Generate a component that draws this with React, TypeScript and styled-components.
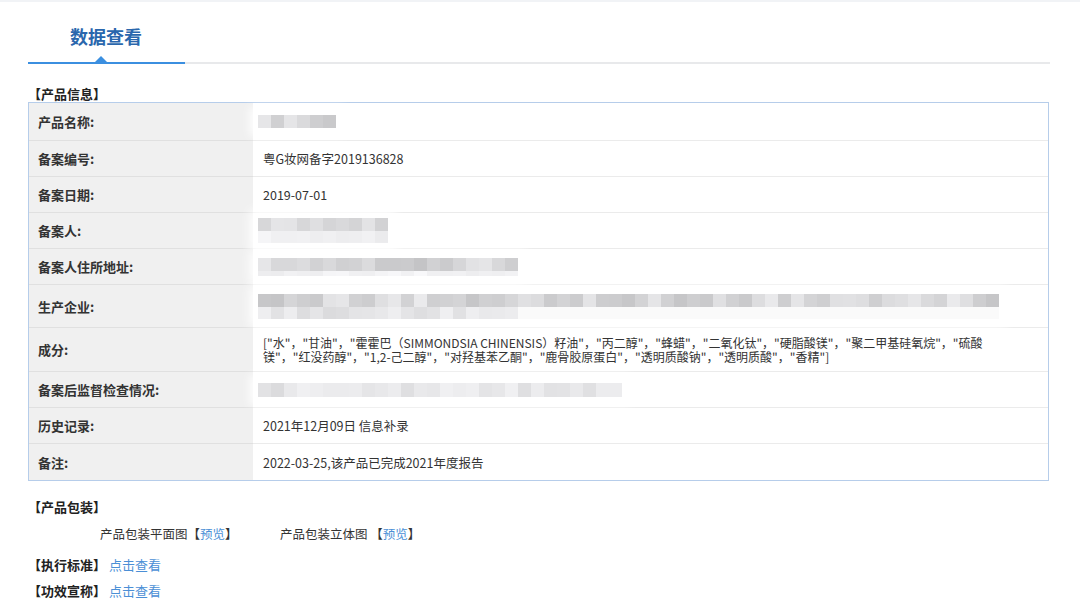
import React from "react";
import styled, { createGlobalStyle } from "styled-components";

const GlobalStyle = createGlobalStyle`
    html, body {
        margin: 0;
        padding: 0;
        background: #ffffff;
        font-family: "Noto Sans CJK SC", "Liberation Sans", sans-serif;
        color: #333333;
    }
`;

const Page = styled.main`
    width: 1080px;
    height: 615px;
    overflow: hidden;
    border-top: 2px solid #f1f3f6;
    box-sizing: border-box;
`;

const Content = styled.div`
    margin-left: 28px;
    width: 1022px;
`;

const TabBar = styled.div`
    display: flex;
    height: 60px;
    border-bottom: 2px solid #e8e9eb;
`;

const Tab = styled.div`
    position: relative;
    width: 157px;
    display: flex;
    align-items: center;
    padding-left: 42px;
    padding-top: 8px;
    box-sizing: border-box;
    margin-bottom: -2px;
    border-bottom: 2px solid #3b8fe0;
    font-size: 18px;
    font-weight: 700;
    color: #2a67ad;

    &::after {
        content: "";
        position: absolute;
        left: 67px;
        bottom: 0;
        border-left: 6px solid transparent;
        border-right: 6px solid transparent;
        border-bottom: 6px solid #3b8fe0;
    }
`;

const SectionTitle = styled.div<{ $top: number }>`
    margin-top: ${(p) => p.$top}px;
    font-size: 13px;
    font-weight: 700;
    color: #222222;
    line-height: 16px;
`;

const Table = styled.div`
    width: 1021px;
    border: 1px solid #b6cdea;
    box-sizing: border-box;
    display: grid;
    grid-template-columns: 224px 1fr;
`;

const Label = styled.div<{ $h: number; $last?: boolean }>`
    height: ${(p) => p.$h}px;
    background: #f0f0f0;
    border-bottom: ${(p) => (p.$last ? "none" : "1px solid #e0e0e0")};
    box-sizing: border-box;
    display: flex;
    align-items: center;
    padding-left: 9px;
    font-size: 13px;
    font-weight: 700;
    color: #333333;
`;

const Value = styled.div<{ $h: number; $last?: boolean }>`
    height: ${(p) => p.$h}px;
    background: #ffffff;
    border-bottom: ${(p) => (p.$last ? "none" : "1px solid #ebebeb")};
    box-sizing: border-box;
    display: flex;
    align-items: center;
    padding-left: 10px;
    font-size: 12.5px;
    color: #333333;
`;

const Ingredients = styled.div`
    font-size: 12px;
    line-height: 14px;
    color: #333333;
    white-space: nowrap;
    padding-top: 1px;
`;

const Mosaic = styled.div`
    display: flex;
    flex-direction: column;
    margin-left: -5px;
    box-shadow: 0 0 10px 8px rgba(255, 255, 255, 0.95);
    background: rgba(250, 250, 250, 0.9);
`;

const MosaicRow = styled.div<{ $h: number }>`
    display: flex;
    height: ${(p) => p.$h}px;
`;

const Cell = styled.span`
    width: 13px;
    height: 100%;
`;

const PackRow = styled.div`
    display: flex;
    margin-top: 11px;
    padding-left: 72px;
    font-size: 12.5px;
    color: #333333;
    line-height: 16px;
`;

const PackItem = styled.span<{ $w?: number }>`
    width: ${(p) => (p.$w ? `${p.$w}px` : "auto")};
`;

const Link = styled.span`
    color: #4b8fd6;
`;

const Bracket = styled.span`
    font-weight: 700;
    color: #222222;
`;

const LinkRow = styled.div<{ $top: number }>`
    margin-top: ${(p) => p.$top}px;
    display: flex;
    align-items: center;
    gap: 3px;
    font-size: 13px;
    line-height: 16px;
`;

type MosaicSpec = { n: number; h: number; lo: number; hi: number }[];

function shade(seed: number, i: number, lo: number, hi: number) {
    const x = Math.sin(seed * 97.13 + i * 12.9898) * 43758.5453;
    const f = x - Math.floor(x);
    const v = Math.round(lo + (hi - lo) * f);
    return `rgb(${v},${v},${v + 2})`;
}

function Blur({ spec, seed }: { spec: MosaicSpec; seed: number }) {
    return (
        <Mosaic>
            {spec.map((r, ri) => (
                <MosaicRow key={ri} $h={r.h}>
                    {Array.from({ length: r.n }).map((_, i) => (
                        <Cell key={i} style={{ background: shade(seed + ri, i, r.lo, r.hi) }} />
                    ))}
                </MosaicRow>
            ))}
        </Mosaic>
    );
}

type Row = { label: string; h: number; value?: React.ReactNode; blur?: MosaicSpec };

const rows: Row[] = [
    { label: "产品名称:", h: 38, blur: [{ n: 6, h: 13, lo: 200, hi: 232 }] },
    { label: "备案编号:", h: 36, value: "粤G妆网备字2019136828" },
    { label: "备案日期:", h: 36, value: "2019-07-01" },
    {
        label: "备案人:",
        h: 36,
        blur: [
            { n: 10, h: 13, lo: 210, hi: 235 },
            { n: 10, h: 12, lo: 232, hi: 246 },
        ],
    },
    {
        label: "备案人住所地址:",
        h: 36,
        blur: [
            { n: 20, h: 13, lo: 195, hi: 232 },
            { n: 20, h: 5, lo: 236, hi: 248 },
        ],
    },
    {
        label: "生产企业:",
        h: 43,
        blur: [
            { n: 57, h: 13, lo: 195, hi: 235 },
            { n: 20, h: 12, lo: 218, hi: 242 },
        ],
    },
    {
        label: "成分:",
        h: 44,
        value: (
            <Ingredients>
                ["水"，"甘油"，"霍霍巴（SIMMONDSIA CHINENSIS）籽油"，"丙二醇"，"蜂蜡"，"二氧化钛"，"硬脂酸镁"，"聚二甲基硅氧烷"，"硫酸
                <br />
                镁"，"红没药醇"，"1,2-己二醇"，"对羟基苯乙酮"，"鹿骨胶原蛋白"，"透明质酸钠"，"透明质酸"，"香精"]
            </Ingredients>
        ),
    },
    {
        label: "备案后监督检查情况:",
        h: 36,
        blur: [{ n: 28, h: 14, lo: 218, hi: 242 }],
    },
    { label: "历史记录:", h: 36, value: "2021年12月09日 信息补录" },
    { label: "备注:", h: 36, value: "2022-03-25,该产品已完成2021年度报告" },
];

export default function App() {
    return (
        <Page>
            <GlobalStyle />
            <Content>
                <TabBar>
                    <Tab>数据查看</Tab>
                </TabBar>

                <SectionTitle $top={22}>【产品信息】</SectionTitle>
                <Table>
                    {rows.map((r, i) => {
                        const last = i === rows.length - 1;
                        return (
                            <React.Fragment key={r.label}>
                                <Label $h={r.h} $last={last}>{r.label}</Label>
                                <Value $h={r.h} $last={last}>
                                    {r.blur ? <Blur spec={r.blur} seed={i + 1} /> : r.value}
                                </Value>
                            </React.Fragment>
                        );
                    })}
                </Table>

                <SectionTitle $top={18}>【产品包装】</SectionTitle>
                <PackRow>
                    <PackItem $w={180}>
                        产品包装平面图【<Link>预览</Link>】
                    </PackItem>
                    <PackItem>
                        产品包装立体图 【<Link>预览</Link>】
                    </PackItem>
                </PackRow>

                <LinkRow $top={15}>
                    <Bracket>【执行标准】</Bracket>
                    <Link>点击查看</Link>
                </LinkRow>
                <LinkRow $top={10}>
                    <Bracket>【功效宣称】</Bracket>
                    <Link>点击查看</Link>
                </LinkRow>
            </Content>
        </Page>
    );
}
